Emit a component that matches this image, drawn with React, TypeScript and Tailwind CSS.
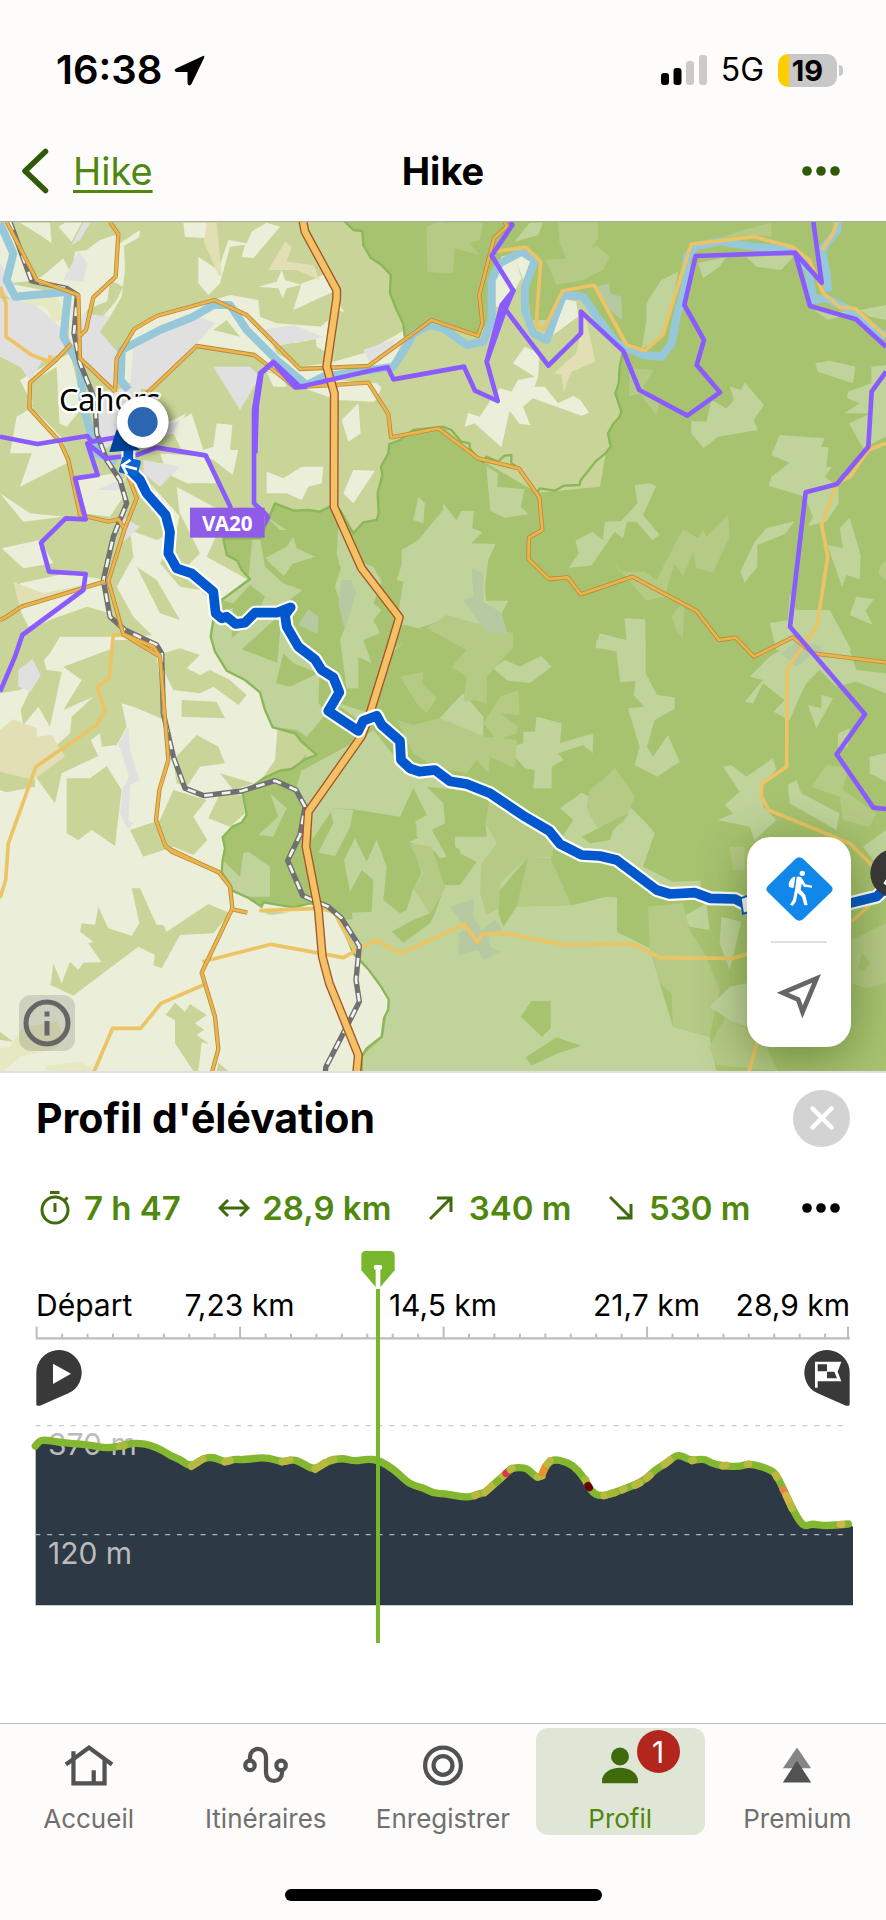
import React from "react";

type Shapes = { fill: string; polys: string[] };

const northWest: Shapes[] = [
  {
    fill: "#ebeed8",
    polys: [
      "60,8 150,8 155,70 120,45", "0,8 30,8 60,90 110,180 30,190 0,140", "195,8 245,8 215,65 175,20",
      "95,180 125,170 190,115 215,165 225,95 260,90 300,60 345,45 360,70 420,30 418,52 372,78 375,150 365,230 330,290 300,300 330,240 260,270 240,340 205,400 210,210",
      "0,150 20,190 210,225 200,360 160,300 60,260 0,210",
      "360,480 350,400 400,330 470,290 640,240 690,225 775,240 780,290 830,310 970,320 985,350 880,370 800,340 830,400 900,440 985,430 1090,400 1215,330 1230,350 1180,440 1010,480 1130,490 1165,520 1120,545 1010,540 900,500 800,450 760,400 590,375 450,510",
      "595,110 655,150 685,60 740,70 755,35 800,8 840,20 760,115 725,110 735,75 690,80 660,190 625,225 595,190",
      "550,8 620,8 620,55 555,50", "845,150 855,180 905,195 860,205 848,235 835,205 775,200 830,185",
      "880,270 905,190 950,175 990,150 1000,215", "1010,245 1033,275 1010,272", "945,335 985,300 975,395 950,380",
      "510,620 575,580 610,690 640,680 650,610 697,615 690,690 715,690 698,765 640,720 600,705 545,690",
      "800,755 850,775 905,740 970,740 965,790 925,800 905,840 860,820 800,820", "1025,600 1075,550 1082,640 1045,665",
      "1060,750 1125,752 1060,850 1030,820", "560,580 520,640 490,640 500,610", "480,700 610,710 650,790 560,790 500,760",
      "450,790 540,890 530,800 640,860 680,880 620,1010 745,1080 670,1140 600,1090 540,1060 520,920", "800,455 850,470 860,500 820,500",
      "50,590 100,560 190,660 200,730 60,800 95,700 30,700", "235,780 340,760 370,830 330,890 250,880",
      "5,985 120,960 160,1030 70,1045", "60,1090 200,1060 320,1080 330,1180 260,1160 150,1200 90,1230 60,1170",
      "390,930 470,960 540,930 480,1030 540,1100 600,1110 640,1150 640,1290 500,1290 400,1190 350,1100 400,1010",
      "60,480 130,440 210,400 250,560 200,620 110,580", "0,820 90,880 190,890 70,905",
    ],
  },
  {
    fill: "#c9d598",
    polys: ["330,180 370,200 350,240 300,300 320,260", "90,490 170,440 180,640 100,570", "540,880 600,1000 560,1040 515,1010", "410,1040 470,1080 540,1200 480,1180", "680,300 720,350 640,330"],
  },
  {
    fill: "#e1e0e0",
    polys: [
      "0,235 60,240 100,250 190,330 215,390 130,420 90,480 60,440 0,410", "250,280 330,290 300,335 355,400 340,510 300,480 245,410 240,330",
      "0,130 15,150 25,230 0,210", "400,390 440,360 600,290 645,310 590,370 450,510 390,500", "250,520 420,500 440,560 350,660 300,700 290,600",
      "790,330 880,315 970,350 820,380", "215,75 250,8 270,8 240,60", "640,440 750,440 780,470 720,570", "430,720 540,740 480,800 430,760",
      "1090,390 1190,355 1170,390 1110,430", "290,810 380,770 360,810", "365,890 420,920 370,965", "190,180 235,95 262,130 250,185", "440,640 540,600 520,640 450,665",
    ],
  },
  { fill: "#e2dfb4", polys: ["620,8 650,8 665,170 655,165 612,65", "855,65 875,80 860,125 940,135 960,180 890,150 805,150", "40,1085 130,1120 250,1095 230,1115 60,1165"] },
  { fill: "#e5e8c0", polys: ["65,245 165,222 200,290 160,310 140,262"] },
];

const forestNorth: Shapes[] = [
  {
    fill: "#bfd39b",
    polys: [
      "745,1077 760,930 775,925 795,1040 850,1090 905,1110 840,1160 750,1095 700,1150 665,1140", "795,1015 860,980 880,950 890,985 945,1010 850,1040",
      "800,890 860,930 840,930", "1015,920 1045,940 1060,1030 1020,1040 1010,1000",
      "1205,990 1255,960 1329,870 1329,1200 1210,1085 1205,1040", "1255,830 1275,850 1270,910 1240,900",
    ],
  },
  { fill: "#b5ca85", polys: ["1280,20 1329,0 1329,160 1282,155"] },
];

const northEast: Shapes[] = [
  {
    fill: "#b5ca85",
    polys: [
      "0,8 120,8 110,60 80,70 110,105 35,85 30,160 0,160", "345,8 465,8 465,55 440,90 460,75 500,110 480,150 420,180 340,195 310,120 370,115 350,70",
      "830,55 900,30 985,8 985,50 920,45", "560,445 632,450 600,500 650,550 640,585 590,520 558,530",
      "510,1025 530,1055 605,1055 640,1080 720,928 765,955 780,930 790,950 855,885 860,950 810,1058 760,1045 750,1000 720,1068 695,1030 665,1130 610,1142",
      "685,1190 725,1140 720,1255 700,1230", "1310,1040 1329,1020 1329,1080 1307,1060",
    ],
  },
  {
    fill: "#bfd39b",
    polys: [
      "610,250 655,180 705,155 690,250 650,360 597,385 610,300", "765,130 850,110 830,140 780,175", "910,110 1055,105 1015,150 940,140",
      "1117,430 1160,422 1237,440 1230,490 1125,455", "1285,440 1329,435 1329,650 1260,685 1218,610 1285,580 1205,580 1250,550 1212,535 1215,515 1285,490",
      "860,500 895,510 905,487 963,555 932,600 945,630 825,650 782,685 745,640 745,603 790,605 805,540 850,565 873,540",
      "1010,645 1145,655 1135,680 1157,682 1150,740 1167,742 1145,770 1187,800 1187,850 1150,905 1095,918 1110,890 1085,830 977,797 985,770 1040,728 985,705",
      "130,740 165,760 162,800 245,808 233,860 257,883 185,893 142,872",
      "575,795 620,790 640,798 600,885 650,945 628,960 580,905 552,905 540,955 515,935 445,1037 378,1043 407,1000 397,962 448,935 480,960 485,905 535,903 583,850",
      "1190,925 1220,893 1253,1005 1250,1077 1210,1065 1197,1100 1153,975 1200,985", "935,965 970,925 1055,903 1025,943 943,975 943,1040 905,1088 892,1055",
      "545,1195 607,1198 607,1290 457,1285 470,1240 550,1260",
      "0,850 40,900 55,873 92,873 88,925 118,937 85,970 158,972 122,1050 130,1145 0,1180",
      "1060,1170 1160,1170 1225,1290 1000,1290 980,1210 1035,1200 1040,1120", "1240,1130 1293,1137 1267,1173 1290,1215 1220,1185",
      "1250,270 1329,255 1329,300 1280,290", "215,65 260,8 300,8 285,45", "1100,260 1155,300 1230,280",
    ],
  },
  { fill: "#b6c9a0", polys: ["455,200 500,190 500,220 535,230 537,300 490,260"] },
];

const clearingFields: Shapes[] = [
  {
    fill: "#ebeed8",
    polys: [
      "150,170 175,110 235,95 275,120 265,170 245,190 220,125 235,175 190,260 160,260 150,220", "330,345 355,235 400,245 405,290",
      "245,380 290,400 285,470 275,500 305,500 345,550 390,528 412,540 438,578 415,587 270,535 240,560 262,615 230,612 200,572 175,682 95,610 65,620 75,578 110,590 150,530 170,505 205,515 225,480 275,470 210,430",
    ],
  },
  { fill: "#e2dfb4", polys: ["425,280 457,425 385,455 362,515 355,465 332,460 400,400"] },
];

const southWest: Shapes[] = [
  {
    fill: "#c9d598",
    polys: [
      "0,0 65,0 90,20 150,0 170,0 130,55 140,90 185,95 150,260 115,200 70,255 62,210 100,130 60,150 0,160",
      "190,80 340,25 345,0 400,0 470,50 480,120 495,240 400,200 365,190 380,260 350,315 305,320 300,280 272,300 295,348 185,400 165,490 110,415 110,370 210,280 215,230 280,170 190,210 245,120",
      "490,40 540,25 600,45 560,85 600,105 630,90 690,120 740,165 715,195 640,140 600,160 520,150 490,90", "545,180 650,185 675,235 545,230",
      "590,285 655,320 675,370 600,380 560,440 530,430 520,360", "832,270 885,280 950,345 875,387 780,425 825,360",
      "200,415 270,415 320,378 365,450 345,618 275,570 235,600 200,580", "390,570 480,540 520,450 620,480 580,530 622,600 580,645 520,620 430,650",
      "625,535 660,460 725,465 735,520 690,560", "660,400 760,430 700,450",
      "395,745 420,745 470,855 490,855 500,875 625,792 690,820 640,880 540,885 485,985 460,975 465,945 415,920 220,1067 152,1035 160,970 185,1030 210,965 235,990 250,968 305,967 265,910 280,905 240,875 245,850 285,855 295,800 325,865 395,887 418,850",
      "525,1088 555,1115 570,1092 620,1125 585,1150 612,1170 590,1185 628,1212 605,1207 595,1293 580,1293 525,1210 525,1140 497,1125",
      "655,1268 685,1293 650,1293", "0,1175 40,1205 0,1200", "780,812 870,818 810,825", "0,390 105,415 105,440 20,457 0,450",
    ],
  },
  { fill: "#e2dfb4", polys: ["0,270 40,238 110,265 110,290 155,285 195,350 100,420 0,395"] },
  { fill: "#e1e0e0", polys: ["55,90 97,57 122,105 92,155 55,140", "385,262 390,330 418,420 390,435 385,540 400,550 385,568 360,520 370,440 388,410 355,310"] },
  { fill: "#e5e8c0", polys: ["0,1225 30,1220 70,1160 170,1145 190,1190 170,1225 60,1250 10,1293 0,1293", "135,1278 240,1265 290,1293 140,1293"] },
];

const southEast: Shapes[] = [
  {
    fill: "#bfd39b",
    polys: [
      "0,760 110,720 180,860 220,800 390,795 490,770 525,772 522,875 620,920 650,1030 690,1160 800,1190 820,1293 -244,1293 -244,1250 -179,1190 -163,1078 -224,988 -269,940 -309,840 -150,830",
      "460,0 608,0 608,100 642,165 695,172 695,207 635,240 612,320 630,350 675,285 710,365 643,410 575,375 590,320 555,205 603,200 572,165 578,123 532,127 520,35 460,22",
      "360,510 415,458 430,530 500,530 560,500 610,550 635,580 600,680 640,700 690,725 773,722 770,765 660,760 470,640 420,590 440,560",
      "980,50 1060,0 1210,0 1240,90 1329,100 1329,160 1240,125 1180,140 1130,90 1090,130 1070,170 1040,240 992,215 1025,180 960,130 930,190 905,185 960,120 920,110",
      "1095,195 1135,205 1135,165 1170,175 1120,265", "840,380 865,375 910,410 990,355 1000,390 960,430 960,500 1000,540 935,600 920,560 825,540 870,520 845,495 890,455",
      "1035,435 1060,420 1075,460 1190,520 1180,570 1040,490", "1280,350 1329,340 1329,425 1280,400", "1185,280 1220,265 1215,320 1185,330",
      "720,830 790,790 800,870 740,860", "835,830 895,845 860,990 830,910", "1260,620 1329,570 1329,650 1290,660",
    ],
  },
  {
    fill: "#b5ca85",
    polys: [
      "480,420 515,385 575,470 540,550 460,550 430,500 445,445", "615,800 720,790 740,870 790,950 830,1050 800,1190 690,1160 685,1060 650,1030 620,920",
      "1150,375 1215,385 1200,450 1300,520 1280,560 1200,540 1190,470 1105,440", "850,1125 960,1200 1005,1293 820,1275 800,1220", "1225,900 1329,850 1329,1030 1270,1045 1225,1030", "860,620 905,620 905,690 870,690",
    ],
  },
  { fill: "#bfd39b", polys: ["800,1100 860,1040 911,1030 911,1160 860,1140"] },
  { fill: "#a8c370", polys: ["265,1083 323,1083 323,1165 297,1190 233,1130", "340,1192 415,1217 345,1240 265,1277 248,1252", "420,580 520,530 562,515 490,560 510,580 440,615", "522,772 610,790 620,925 522,875", "1245,980 1258,940 1282,970 1260,995"] },
  { fill: "#b6c9a0", polys: ["1015,40 1050,10 1130,15 1150,60 1110,40 1060,80"] },
];

const forestCentral: Shapes[] = [
  {
    fill: "#bfd39b",
    polys: [
      "35,230 48,160 110,140 150,75 240,140 250,190 300,260 360,320 355,430 380,460 320,530 290,510 218,500 195,450 180,397 135,360 80,330 42,270",
      "150,0 170,0 180,70 305,93 240,140 150,75 105,130 68,118 150,55",
      "610,0 865,0 850,122 925,122 905,160 920,218 820,190 730,180 655,205 590,190 610,65 590,60",
      "430,0 465,0 520,20 545,65 520,130 545,150 520,180 540,220 490,240 515,310 475,290 475,385 440,385 420,240 440,190 405,80", "540,300 610,245 555,300",
      "415,430 510,460 490,490 420,440", "200,0 285,0 252,48",
      "475,540 520,510 600,610 750,660 880,720 1060,860 1020,1060 900,1200 480,1200 455,1060 340,880 330,740 290,690 290,640",
      "210,700 260,745 240,785 220,830 175,825 235,770", "130,880 145,875 210,920 210,1010 140,1010 185,1035 100,995 66,940 68,900 120,950",
      "760,430 790,400 850,470 850,530 715,480", "1010,470 1085,490 1080,550 1180,520 1178,580 1150,555 1075,580 1090,600 1055,620 1055,685 1000,685 1005,630 975,625 945,590 950,555 970,550 970,515 1005,515",
      "880,325 915,300 960,320 1023,287 1055,320 990,368 922,362", "1080,745 1145,698 1170,710 1170,770 1240,760 1290,750 1329,800 1329,960 1240,900 1140,880 1080,840 1120,780",
    ],
  },
  {
    fill: "#a8c370",
    polys: [
      "125,268 245,160 232,308", "250,280 280,310 355,340 270,380 228,370", "100,130 150,75 195,110 160,180 95,235",
      "458,748 600,770 640,683 680,765 645,785 665,830 615,850 560,920 530,840 500,905 465,835 432,900 450,995 485,930 520,960 515,1055 455,1058 380,1010 330,850 400,745",
      "610,840 640,850 665,940 640,985 620,1050 600,1060 550,1020 560,920",
      "680,680 880,700 857,790 860,830 765,830 765,860 830,905 780,975 735,975 705,1060 690,1090 610,1148 575,1115 640,1080 690,1060 735,985 695,870 740,890 695,810 735,790 730,730",
    ],
  },
  { fill: "#bfd39b", polys: ["390,745 460,750 450,800 405,888 355,878 400,790", "650,780 690,775 695,810 740,890 720,895 690,855 650,830", "780,840 855,830 890,850 830,905 780,880"] },
  {
    fill: "#b5ca85",
    polys: [
      "630,850 695,860 735,985 690,1063 640,985 670,940", "870,700 1050,820 1060,890 985,890 900,970 905,1040 860,1065 840,1000 845,910 890,850 857,790",
      "985,890 1050,895 1115,1035 945,1040", "680,205 740,165 940,220 940,260 860,350 860,430 825,420 790,425 800,350 755,320 800,270",
      "590,480 640,495 720,475 855,530 950,540 945,625 870,590 865,640 830,600 800,640 700,620 640,580", "600,350 670,335 665,370 710,415 680,460 650,430",
      "900,410 955,390 958,465 900,460 955,500 950,520 890,540 850,490", "1210,670 1245,625 1305,710 1270,790 1190,800 1160,745 1170,685 1215,720",
    ],
  },
  { fill: "#a8c370", polys: ["900,990 985,890 950,1040 910,1100 895,1060", "1145,830 1260,770 1290,760 1240,810 1230,840 1170,850", "285,625 320,580 290,680 275,660"] },
  {
    fill: "#b6c9a0",
    polys: [
      "750,1040 822,1017 820,1070 845,1110 885,1080 908,1110 865,1120 870,1160 900,1175 852,1200 835,1170 775,1185 777,1120 800,1110",
      "425,60 455,60 467,100 435,210 415,130", "325,148 355,170 353,222 295,195", "790,120 820,110 815,25 850,40 850,125 905,160 920,218 860,218",
    ],
  },
];

const orangeRoads = [
  "20,6 110,180 235,225 240,415 345,515", "330,6 355,42 347,170 280,232 258,330 240,347",
  "345,515 350,415 403,327 470,288 643,240 740,285 900,447 1105,438 1295,300 1329,312 1434,347 1447,310 1438,225 1482,55 1520,20 1515,6",
  "430,530 590,378 763,405 885,502 1105,488 1165,582 1173,652 1315,625 1434,715 1556,745 1618,832 1627,930 1587,953 1585,1017 1647,1077 1703,1072 1743,1123 1897,1070 2090,1173 2157,1260 2207,1253 2262,1310 2378,1252 2440,1300 2658,1327",
  "213,372 170,418 90,488 88,565 180,665 205,720 240,885 325,905 355,898 373,925",
  "375,740 410,835 373,930 325,1083 370,1243 480,1310 505,1620 478,1710 468,1800 495,1875 515,1895 655,1955 690,2000 697,2065 605,2258 645,2390 655,2487 635,2560",
  "495,1880 655,1957", "313,1085 65,1160 20,1190 0,1200", "697,2068 742,2078", "370,1243 460,1280 480,1310",
];
const yellowRoads = [
  "0,200 18,250 18,350 95,405 150,425 150,405", "370,1245 340,1245 327,1375 292,1400 315,1472 290,1515 108,1640 25,1870 17,1980 0,2035",
  "607,2225 813,2173 1030,2213 1125,2160 1203,2200 1393,2113 1433,2168 1445,2142 1510,2140 1685,2173 1897,2172 1980,2213 2200,2215 2560,2100 2610,2055",
  "778,2072 960,2065 1003,2077 1065,2195", "610,2295 483,2350 422,2425 338,2425 280,2560",
  "1480,95 1578,82 1622,125 1608,320 1633,327 1687,213 1782,195 1880,375 1935,392 1988,345 2073,73 2262,50 2380,82 2428,120 2470,220 2520,262 2565,265 2658,350",
  "2510,6 2500,40 2465,90", "2658,670 2605,690 2550,770 2510,790 2465,915 2483,1010 2452,1215 2361,1348 2360,1640 2287,1690 2283,1725 2305,1770 2550,1870 2630,1950", "2280,2440 2245,2560",
];
const rivers = [
  "0,10 40,100 20,180 45,230 205,215 190,350 240,440 250,560 290,700 350,725",
  "385,510 362,480 365,390 480,330 580,290 640,255 690,255 740,330 830,420 920,495 970,470 1180,440 1225,370 1240,340 1290,315 1329,325 1400,375 1450,365 1475,300 1475,180 1500,130 1565,95 1605,120 1575,200 1575,270 1600,340 1640,360 1665,290 1690,225 1750,230 1790,290 1850,370 1930,405 1985,410 2015,370 2030,290 2055,200 2060,110 2090,78 2160,65 2260,80 2380,90 2425,150 2440,240 2480,235 2540,265 2658,350",
  "2512,6 2512,30 2465,90 2480,160 2485,215",
];
const purpleTrails = [
  "0,650 112,672 262,648 275,665 350,652", "262,670 318,715 410,705 470,683 617,706 693,865",
  "275,665 262,670 293,765 225,775 257,898 197,895 123,968 147,1055 257,1062 250,1110 67,1245 45,1310 0,1415",
  "805,890 762,850 762,570 780,460 820,425 900,500 1120,450 1163,442 1180,478 1392,440 1425,512 1493,543 1460,425 1515,270 1540,212 1475,107 1537,15 1530,6",
  "766,700 770,560 785,458 820,428 885,502 920,500", "1460,425 1505,255 1540,212 1510,260 1645,437 1743,340 1743,275 1870,393 1918,510 2062,587 2160,517 2090,435 2112,360 2053,255 2087,108 2385,98 2430,258 2568,298 2658,380",
  "2385,98 2465,188 2440,6", "2658,455 2615,515 2605,680 2510,793 2417,817 2370,1220 2595,1483 2510,1603 2620,1763 2658,1767",
];
const motorway = "908,0 915,35 1010,210 1010,235 980,440 1003,520 1002,860 1085,1045 1198,1192 1175,1270 1110,1480 1085,1548 925,1775 918,1880 955,2070 967,2210 988,2290 1075,2505 1070,2560";
const railway = "30,6 95,183 200,205 232,225 222,340 240,430 285,540 290,640 320,720 360,780 380,850 340,950 310,1080 330,1190 375,1230 470,1275 485,1300 490,1480 520,1610 555,1705 612,1727 725,1713 825,1682 888,1710 915,1760 900,1845 863,1922 908,2027 985,2060 1025,2095 1078,2178 1068,2280 1078,2345 1035,2430 978,2540 975,2560";
const route = "385,690 385,745 420,780 440,820 497,885 510,935 505,1000 530,1045 575,1060 640,1115 647,1180 665,1195 680,1190 707,1212 735,1208 765,1178 830,1178 872,1162 855,1185 860,1220 895,1280 945,1318 965,1350 1000,1372 1018,1417 985,1473 1075,1533 1090,1502 1130,1487 1145,1515 1200,1563 1203,1620 1230,1645 1258,1655 1305,1650 1350,1684 1400,1692 1470,1720 1575,1790 1648,1833 1680,1872 1745,1905 1800,1908 1850,1920 1970,2010 2010,2022 2085,2018 2130,2035 2205,2037 2240,2055 2330,2070 2500,2062 2548,2050 2630,2030 2655,2005";
const forestEdge = "1030,0 1060,30 1087,33 1090,75 1112,113 1145,135 1172,165 1170,220 1190,270 1210,312 1214,350";
const forestWest = "1329,620 1240,630 1200,660 1168,672 1165,700 1143,740 1147,765 1133,820 1136,880 1130,900 1090,907 1060,940 1020,870 990,860 960,875 925,870 880,872 825,850 808,890 780,955 670,955 680,1005 712,1022 725,1050 750,1077 665,1140 640,1200 632,1250 645,1295 680,1352 735,1380 780,1417 795,1470 818,1522 885,1540 905,1565 950,1605 915,1618 875,1647 840,1652 790,1675 728,1720 740,1785 725,1808 697,1820 668,1852 675,1885 668,1920 665,1957 693,1998 697,2012 742,2032 785,2060 790,2047 880,2062 930,2050 985,2060 1020,2100 1060,2200 1105,2248 1140,2295 1166,2338 1165,2368 1152,2395 1145,2450 1100,2485 1085,2510 1085,2560";
const clearingSouth = "1869,395 1859,440 1856,490 1846,520 1864,575 1859,590 1839,612 1824,640 1832,680 1816,700 1786,725 1741,782 1739,795 1691,797 1664,812 1619,805 1612,818 1557,745 1534,730 1534,705 1514,707 1494,725 1459,710 1449,727 1434,715 1409,685 1409,670 1384,665 1354,630 1329,620";
const clearing = "1214,350 1290,312 1329,325 1400,375 1450,365 1475,300 1480,180 1500,130 1560,95 1610,120 1585,200 1590,300 1640,350 1680,230 1740,225 1800,290 " + clearingSouth + " 1240,630 1200,660 1100,600";

function Terrain({ shapes, transform }: { shapes: Shapes[]; transform?: string }) {
  return (
    <g transform={transform}>
      {shapes.map((s, i) => (
        <g key={i} fill={s.fill}>
          {s.polys.map((p) => <polygon key={p} points={p} />)}
        </g>
      ))}
    </g>
  );
}

function Lines({ lines, color, width, dash }: { lines: string[]; color: string; width: number; dash?: string }) {
  return (
    <g fill="none" stroke={color} strokeWidth={width} strokeLinejoin="round" strokeDasharray={dash}>
      {lines.map((l) => <polyline key={l} points={l} />)}
    </g>
  );
}

function MapCanvas() {
  return (
    <svg viewBox="0 6 2658 2547" className="block w-full" role="img" aria-label="Carte">
      <defs>
        <filter id="soft" x="-50%" y="-50%" width="200%" height="200%"><feGaussianBlur stdDeviation="12" /></filter>
      </defs>
      <rect width="2658" height="2560" fill="#c9d598" />
      <Terrain shapes={northWest} />
      <polygon fill="#ebeed8" points="0,1420 60,1400 150,1300 180,1250 340,1250 640,1240 1250,1500 1250,2560 0,2560" />
      <Terrain shapes={southWest} transform="translate(0 1260)" />
      <polygon fill="#a8c370" points={forestEdge + " 1329,325 1434,345 1470,300 1800,300 1869,395 1800,800 1612,818 1434,715 " + forestWest + " 2658,2560 2658,0"} />
      <polygon fill="#c9d598" points="1015,870 1133,820 1130,900 1090,907 1060,940" />
      <Terrain shapes={forestNorth} />
      <Terrain shapes={northEast} transform="translate(1329 0)" />
      <Terrain shapes={southEast} transform="translate(1329 1260)" />
      <Terrain shapes={forestCentral} transform="translate(600 1020)" />
      <polygon fill="#c9d598" points={clearing} />
      <Terrain shapes={clearingFields} transform="translate(1329 0)" />
      <Lines lines={[forestEdge, forestWest, clearingSouth]} color="#8ab758" width={7} />
      <Lines lines={rivers} color="#96c8d9" width={24} />
      <Lines lines={yellowRoads} color="#ecc465" width={11} />
      <Lines lines={[railway]} color="#707070" width={16} />
      <Lines lines={[railway]} color="#f4f4f0" width={8} dash="26 27" />
      <Lines lines={orangeRoads} color="#b98c3b" width={13} />
      <Lines lines={orangeRoads} color="#ecb44c" width={8} />
      <Lines lines={[motorway]} color="#a4552b" width={27} />
      <Lines lines={[motorway]} color="#f4c165" width={19} />
      <Lines lines={purpleTrails} color="#8a5bff" width={14} />
      <g fill="#8f5ce8"><rect x="570" y="863" width="224" height="90" /><polygon points="794,870 812,893 794,925" /></g>
      <text x="682" y="932" textAnchor="middle" fontSize="62" fontWeight="700" fill="#fff" fontFamily="'Noto Sans', sans-serif">VA20</text>
      <text x="177" y="573" fontSize="92" fill="#000" stroke="#fff" strokeWidth="14" strokeLinejoin="round" paintOrder="stroke" fontFamily="'Noto Sans', sans-serif">Cahors</text>
      <g fill="none" strokeLinejoin="round" strokeLinecap="round">
        <polyline points={route} stroke="#fff" strokeWidth="42" />
        <polyline points={route} stroke="#0057ce" strokeWidth="29" />
      </g>
      <polygon points="350,628 420,690 328,696" fill="#00439d" />
      <g transform="rotate(14 390 742)">
        <rect x="360" y="715" width="58" height="50" rx="6" fill="#0b63d2" />
        <path d="M412 742H368M386 720L366 742L386 764" fill="none" stroke="#fff" strokeWidth="8" />
      </g>
      <circle cx="436" cy="614" r="80" fill="#000" opacity=".5" filter="url(#soft)" />
      <circle cx="428" cy="606" r="78" fill="#fff" />
      <circle cx="428" cy="606" r="45" fill="#2c66b0" />
      <path d="M2222 2035l22-8v50l-15 4z" fill="#fff" stroke="#0057ce" strokeWidth="6" />
      <circle cx="2684" cy="1960" r="73" fill="#393939" />
      <path d="M2650 1990l8-12v18z" fill="#fff" />
    </svg>
  );
}

function MapOverlay() {
  return (
    <>
      <button aria-label="Informations" className="absolute bottom-5 left-[19px] size-14 rounded-xl bg-black/12">
        <svg viewBox="0 0 56 56" className="size-14">
          <circle cx="28" cy="28" r="21" fill="none" stroke="#666" strokeWidth="5" />
          <path d="M28 16.500v5M28 26v14.500" stroke="#666" strokeWidth="5" />
        </svg>
      </button>
      <div className="absolute right-[35px] bottom-6 flex w-[104px] flex-col items-center rounded-3xl bg-white shadow-[0_10px_50px_rgba(40,60,0,0.45)]">
        <button aria-label="Randonnée" className="flex h-[104px] w-full items-center justify-center">
          <svg viewBox="0 0 201 192" className="h-16 w-[67px]">
            <path d="M88 6Q100-4 112 6L195 86Q205 96 195 106L112 186Q100 196 88 186L6 106Q-4 96 6 86Z" fill="#1287ea" />
            <circle cx="109" cy="49" r="8" fill="#fff" />
            <path d="M88 59q-11 0-17 13t0 19l12 2zM92 60q12-5 17 6l9 16 20 4v6l-24-3-7-9-3 18 14 16 7 30-10 1-7-25-13-13-5 26-9 13-9-3 9-15 6-30z" fill="#fff" />
          </svg>
        </button>
        <div className="h-0.5 w-14 bg-[#e0e0e0]" />
        <button aria-label="Ma position" className="flex h-[104px] w-full items-center justify-center">
          <svg viewBox="0 0 128 128" className="size-[43px] overflow-visible">
            <path d="M115 13L14 56 60 76 73 113Z" fill="none" stroke="#666" strokeWidth="14" strokeMiterlimit="4" />
          </svg>
        </button>
      </div>
    </>
  );
}

function StatusBar() {
  return (
    <div className="flex h-[120px] items-center justify-between pt-5 pr-[43px] pl-14">
      <div className="flex items-center gap-3">
        <span className="text-[40px] leading-none font-semibold">16:38</span>
        <svg viewBox="0 0 31 31" className="size-[31px]"><path d="M28.500 1.200 2 13.500Q-1 16 2.500 17H13.500V28.500Q15 32 17.500 29L30 3Q31 0 28.500 1.200Z" /></svg>
      </div>
      <div className="flex items-center">
        <svg viewBox="0 0 46 30" className="mr-3.5 h-[30px] w-[46px]">
          <rect y="18" width="8" height="12" rx="3" /><rect x="12.500" y="13" width="8" height="17" rx="3" />
          <g fill="#cbcac9"><rect x="25" y="6" width="8" height="24" rx="3" /><rect x="38" width="8" height="30" rx="3" /></g>
        </svg>
        <span className="mr-3.5 text-[32px] leading-none">5G</span>
        <span className="flex h-[33px] w-[59px] items-center justify-center rounded-[10px] bg-[linear-gradient(90deg,#ffcc00_19%,#c9c8c8_19%)] text-[29px] leading-none font-bold">19</span>
        <span className="ml-0.5 h-[11px] w-1 rounded-r-full bg-[#c9c8c8]" />
      </div>
    </div>
  );
}

function Dots({ className }: { className: string }) {
  return (
    <svg viewBox="0 0 38 10" className={className} fill="currentColor">
      <circle cx="5" cy="5" r="4.800" /><circle cx="19" cy="5" r="4.800" /><circle cx="33" cy="5" r="4.800" />
    </svg>
  );
}

function Header() {
  return (
    <header className="grid h-[102px] grid-cols-3 items-center border-b border-[#a9aaa4] text-[38px] leading-none">
      <div className="flex items-center gap-6 pl-[21px]">
        <button aria-label="Retour">
          <svg viewBox="0 0 28 46" className="h-[46px] w-7"><path d="M24.500 3.500 4 23 24.500 42.500" fill="none" stroke="#315a08" strokeWidth="5.500" strokeLinecap="round" strokeLinejoin="round" /></svg>
        </button>
        <a href="#hike" className="text-[#4f870f] underline decoration-[3px] underline-offset-[5px]">Hike</a>
      </div>
      <h1 className="text-center font-bold">Hike</h1>
      <button aria-label="Options" className="mr-[46px] justify-self-end text-[#315a08]"><Dots className="h-2.5 w-[38px]" /></button>
    </header>
  );
}

const profile: [number, number][] = [
  [106, 168], [118, 152], [135, 150], [190, 158], [270, 165], [318, 175], [365, 168], [395, 160], [420, 160], [450, 165], [490, 182], [510, 197], [540, 208], [572, 231], [610, 205], [640, 201], [675, 217], [705, 207], [725, 210], [800, 201], [845, 217], [880, 208], [905, 218], [943, 241], [985, 212], [1028, 204], [1065, 214], [1100, 207], [1135, 210], [1185, 240], [1220, 275], [1245, 288], [1270, 293], [1300, 310], [1329, 310],
  [1404, 324], [1434, 312], [1454, 308], [1479, 285], [1519, 250], [1536, 233], [1574, 233], [1589, 242], [1609, 262], [1626, 258], [1634, 232], [1657, 206], [1704, 217], [1734, 240], [1759, 275], [1774, 305], [1799, 319], [1839, 310], [1929, 275], [1964, 240], [1999, 220], [2026, 197], [2044, 197], [2074, 212], [2114, 206], [2134, 220], [2169, 228], [2219, 230], [2249, 220], [2319, 240], [2337, 270], [2354, 305], [2379, 360], [2404, 402], [2419, 408], [2437, 401], [2474, 408], [2545, 402],
];
const grades: [string, string][] = [
  ["#a9b93a", "358,169 372,167"], ["#b9b93f", "574,229 608,207"], ["#b9b93f", "675,216 690,211"], ["#b9b93f", "846,216 870,210"], ["#b9b93f", "945,238 975,218"], ["#a9b93a", "990,211 1002,208"],
  ["#b9b93f", "1425,317 1430,314"], ["#b9b93f", "1454,308 1479,285 1512,256"], ["#83b72f", "1490,276 1494,272"], ["#d63b46", "1518,250 1524,245"], ["#b9b93f", "1531,239 1536,235"],
  ["#b9b93f", "1612,262 1626,258"], ["#e8922f", "1628,248 1636,230"], ["#b9b93f", "1642,222 1650,213"], ["#a9b93a", "1756,268 1760,277"], ["#6b0000", "1764,287 1768,293"],
  ["#b9b93f", "1812,317 1820,315"], ["#a5b836", "1830,312 1845,308"], ["#b9b93f", "1868,299 1872,297"], ["#b9b93f", "1905,286 1920,279"], ["#b9b93f", "1940,265 1950,256"], ["#b9b93f", "1992,224 2010,210"],
  ["#b9b93f", "2076,212 2080,211"], ["#b9b93f", "2168,228 2178,226"], ["#b9b93f", "2242,223 2246,222"], ["#b9b93f", "2327,255 2331,262"], ["#e0844a", "2349,298 2354,307"], ["#d3b548", "2358,316 2370,342"], ["#b9b93f", "2372,347 2376,355"], ["#d3b548", "2521,403 2525,403"],
];
const profilePath = "M" + profile.map(([x, y], i) => {
  if (i === 0) return `${x} ${y}`;
  const next = profile[i + 1];
  return next ? `Q${x} ${y} ${(x + next[0]) / 2} ${(y + next[1]) / 2}` : `L${x} ${y}`;
}).join("");
const ticks = Array.from({ length: 33 }, (_, i) => i);

function ElevationChart() {
  return (
    <svg viewBox="108 765 2442 954" className="block w-full overflow-visible" role="img" aria-label="Profil d'élévation">
      <path d="M108 805H2550" stroke="#bdbdbd" strokeWidth="7" />
      {ticks.map((i) => (
        <rect key={i} x={i === 32 ? 2541 : 107 + i * 76.3} y={i % 8 === 0 ? 770 : 791} width="6" height={i % 8 === 0 ? 34 : 14} fill="#bdbdbd" />
      ))}
      <path d="M109 1003V908A68 68 0 1 1 205 970L120 1007Q109 1009 109 1003Z" fill="#393939" />
      <path d="M159 881V942L213 911Z" fill="#fff" />
      <path d="M2549 1003V908A68 68 0 1 0 2453 970L2538 1007Q2549 1009 2549 1003Z" fill="#393939" />
      <path d="M2445 875H2524L2513 905 2524 934H2453V953H2445ZM2453 883V904H2481V925H2511L2503 905H2481V883Z" fill="#fff" fillRule="evenodd" />
      <g transform="translate(0 960)">
        <path d={profilePath + "L2559 410V646H107V168Z"} fill="#2e3946" transform="translate(0 0)" />
        <path d="M106 107H2535" stroke="#ccc" strokeWidth="4" strokeDasharray="15 20.400" />
        <path d="M106 434H2535" stroke="#b0b4b8" strokeWidth="4" strokeDasharray="15 20.400" />
        <text x="144" y="195" fontSize="90" fill="#bbb" fontFamily="Inter, sans-serif">370 m</text>
        <text x="144" y="521" fontSize="90" fill="#bbb" fontFamily="Inter, sans-serif">120 m</text>
        <g fill="none" strokeWidth="22" strokeLinecap="round" strokeLinejoin="round">
          <path d={profilePath} stroke="#83b72f" />
          {grades.map(([c, p]) => <polyline key={p} points={p} stroke={c} />)}
        </g>
      </g>
    </svg>
  );
}

const statIcon = "fill-none stroke-[#3f6b0c] stroke-3";

function Stats() {
  return (
    <div className="flex h-[90px] items-center justify-between pr-2.5 pl-1 text-[33px] leading-none font-semibold text-[#4f870f]">
      <span className="flex items-center gap-3.5">
        <svg viewBox="0 0 30 34" className={`h-[34px] w-[30px] ${statIcon}`}><circle cx="15" cy="19" r="13" /><path d="M10 1.500h9.500M15 12v9M24.500 9.500l3-3" /></svg>7 h 47
      </span>
      <span className="flex items-center gap-3">
        <svg viewBox="0 0 32 20" className={`h-5 w-8 ${statIcon}`}><path d="M2 10h28M10 2 2 10l8 8M22 2l8 8-8 8" /></svg>28,9 km
      </span>
      <span className="flex items-center gap-4">
        <svg viewBox="0 0 24 24" className={`size-6 ${statIcon}`}><path d="M1 23 22 2M8 2h14v14" /></svg>340 m
      </span>
      <span className="flex items-center gap-4">
        <svg viewBox="0 0 24 24" className={`size-6 ${statIcon}`}><path d="M1 1l21 21M8 22h14V8" /></svg>530 m
      </span>
      <button aria-label="Plus" className="ml-3.5 text-black"><Dots className="h-2.5 w-[38px]" /></button>
    </div>
  );
}

function ElevationPanel() {
  return (
    <section className="border-t-2 border-[#e0e0e0] bg-white px-9 pb-20">
      <div className="flex h-[90px] items-center justify-between">
        <h2 className="text-[41px] leading-none font-bold">Profil d'élévation</h2>
        <button aria-label="Fermer" className="flex size-[57px] items-center justify-center rounded-full bg-[#d3d3d3]">
          <svg viewBox="0 0 24 24" className="size-6"><path d="M2.500 2.500l19 19M21.500 2.500l-19 19" stroke="#fff" strokeWidth="4.500" strokeLinecap="round" /></svg>
        </button>
      </div>
      <Stats />
      <div className="relative">
        <div className="grid h-[72px] grid-cols-[minmax(0,1fr)_minmax(0,2fr)_minmax(0,2fr)_minmax(0,2fr)_minmax(0,1fr)] items-end text-center text-[30px] leading-10 whitespace-nowrap">
          <span className="text-left">Départ</span><span>7,23 km</span><span>14,5 km</span><span>21,7 km</span><span className="justify-self-end">28,9 km</span>
        </div>
        <ElevationChart />
        <div className="absolute -top-0.5 bottom-0 left-[42%] flex w-[34px] -translate-x-1/2 flex-col items-center">
          <svg viewBox="0 0 102 114" className="h-[38px] w-[34px] shrink-0">
            <path d="M14 0H88Q101 0 101 14V58L58 108H44L1 58V14Q1 0 14 0Z" fill="#78b72c" />
            <path d="M44 42H58Q64 42 64 49T58 56V108Q51 118 44 108V56Q38 56 38 49T44 42Z" fill="#fff" />
          </svg>
          <div className="w-1 grow bg-[#78b72c]" />
        </div>
      </div>
    </section>
  );
}

const tabIcon = "size-[52px] fill-none stroke-[#525252] stroke-[4.5]";

function Tab({ label, active, badge, children }: { label: string; active?: boolean; badge?: string; children: React.ReactNode }) {
  return (
    <a href={`#${label}`} className={`relative mx-1 flex h-[107px] flex-col items-center rounded-xl pt-3 ${active ? "bg-[#dfe6d6] text-[#4f870f]" : "text-[#707070]"}`}>
      {children}
      <span className="mt-3.5 text-[26px] leading-8">{label}</span>
      {badge && <span className="absolute top-0.5 left-[101px] flex size-[43px] items-center justify-center rounded-full bg-[#b3261e] text-[30px] leading-none text-white">{badge}</span>}
    </a>
  );
}

function TabBar() {
  return (
    <nav className="border-t border-[#bcbcbc] bg-[#fdfcfa] pt-1">
      <div className="grid grid-cols-5">
        <Tab label="Accueil">
          <svg viewBox="0 0 52 52" className={tabIcon}><path d="M1.500 26 26 8l24.500 18M9.500 12v34h33V21M31 46V32" /></svg>
        </Tab>
        <Tab label="Itinéraires">
          <svg viewBox="0 0 52 52" className={tabIcon}><circle cx="9" cy="27" r="5" /><circle cx="42" cy="27" r="5" /><path d="M9 22v-4a8.500 8.500 0 0 1 17 0v17a8.500 8.500 0 0 0 17 0v-3" /></svg>
        </Tab>
        <Tab label="Enregistrer">
          <svg viewBox="0 0 52 52" className={tabIcon}><circle cx="26" cy="27" r="19" /><circle cx="26" cy="27" r="10" /></svg>
        </Tab>
        <Tab label="Profil" active badge="1">
          <svg viewBox="0 0 52 52" className="size-[52px] fill-[#3f6b0c]"><circle cx="26" cy="17.500" r="9.500" /><path d="M7 46v-3a19 13.500 0 0 1 38 0v3z" /></svg>
        </Tab>
        <Tab label="Premium">
          <svg viewBox="0 0 52 52" className="size-[52px]"><path d="M26 8 41 30H11z" fill="#858585" /><path d="M26 22 41 45H11z" fill="#525252" /></svg>
        </Tab>
      </div>
      <div className="flex h-[85px] items-end justify-center pb-[19px]">
        <div className="h-3 w-[317px] rounded-full bg-black" />
      </div>
    </nav>
  );
}

export default function App() {
  return (
    <div className="min-h-screen bg-[#fdfcfa] font-['Inter',sans-serif] text-black">
      <StatusBar />
      <Header />
      <main>
        <div className="relative overflow-hidden">
          <MapCanvas />
          <MapOverlay />
        </div>
        <ElevationPanel />
      </main>
      <TabBar />
    </div>
  );
}
